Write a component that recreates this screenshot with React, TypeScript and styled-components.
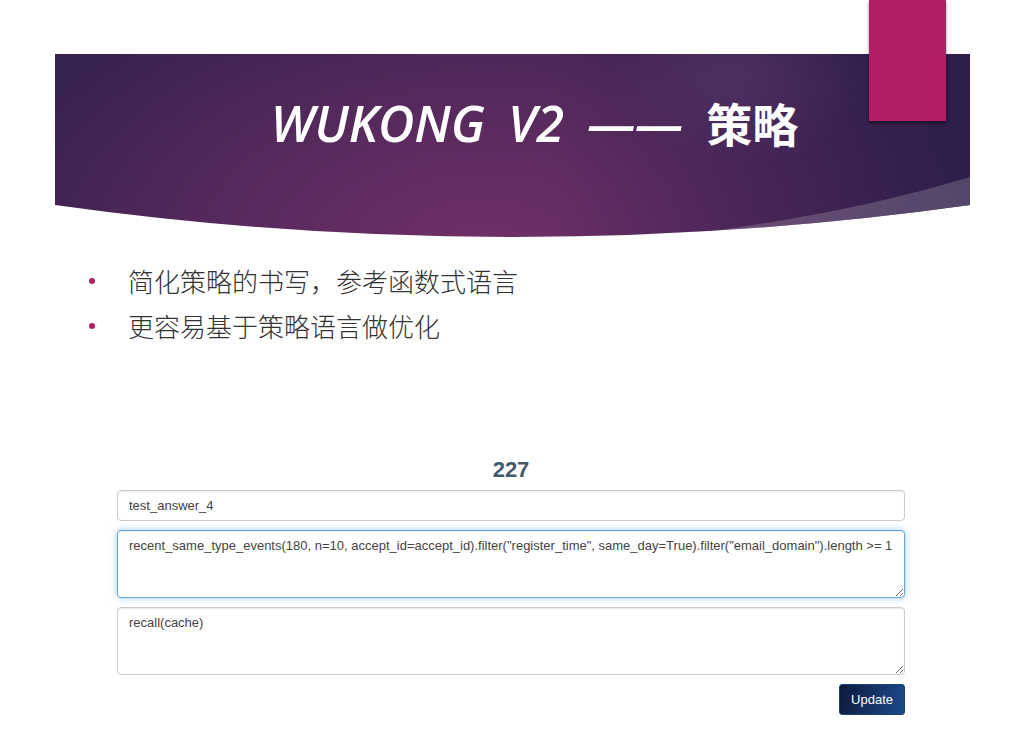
import React from "react";
import styled, { createGlobalStyle, css } from "styled-components";

const GlobalStyle = createGlobalStyle`
  *, *::before, *::after { box-sizing: border-box; }
  body {
    margin: 0;
    background: #fff;
    font-family: "Liberation Sans", "Noto Sans CJK SC", sans-serif;
  }
`;

const Slide = styled.main`
  position: relative;
  padding: 54px 53px 32px 55px;
`;

const Ribbon = styled.div`
  position: absolute;
  top: 0;
  right: 77px;
  width: 77px;
  height: 121px;
  background: #b01e63;
  box-shadow: 0 2px 3px rgba(0, 0, 0, 0.45);
`;

const Banner = styled.header`
  position: relative;
  height: 184px;
  padding: 40px 0 0 44px;
  text-align: center;
`;

const BannerShape = styled.svg`
  position: absolute;
  inset: 0;
  width: 100%;
  height: 100%;
`;

const Title = styled.h1`
  position: relative;
  margin: 0;
  color: #fff;
  font-family: "Open Sans", "Noto Sans CJK SC", sans-serif;
  font-size: 50px;
  font-style: italic;
  font-weight: 600;
  line-height: 56px;
  white-space: nowrap;
`;

const TitleWord = styled.span`
  margin-right: 10px;
`;

const TitleHan = styled.span`
  font-family: "Noto Sans CJK SC", sans-serif;
  font-size: 46px;
  font-style: normal;
  font-weight: 700;
`;

const Points = styled.ul`
  margin: 20px 0 0;
  padding: 0 0 0 34px;
  list-style: none;
`;

const Point = styled.li`
  display: flex;
  align-items: center;
  gap: 33px;
  color: #333;
  font-family: "Noto Sans CJK SC", sans-serif;
  font-size: 26px;
  font-weight: 300;
  line-height: 45px;

  &::before {
    content: "";
    width: 6px;
    height: 6px;
    border-radius: 50%;
    background: #b01e63;
  }
`;

const RuleForm = styled.form`
  display: flex;
  flex-direction: column;
  gap: 9px;
  margin: 102px 65px 0 62px;
`;

const RuleId = styled.h2`
  margin: 0 0 -9px;
  color: #435a6d;
  font-size: 22px;
  font-weight: 700;
  line-height: 40px;
  text-align: center;
`;

const fieldStyle = css<{ $active?: boolean }>`
  display: block;
  width: 100%;
  margin: 0;
  padding: 6px 11px;
  border: 1px solid ${(p) => (p.$active ? "#66a3d8" : "#ccc")};
  border-radius: 4px;
  outline: none;
  background: #fff;
  box-shadow: ${(p) =>
    p.$active
      ? "inset 0 1px 1px rgba(0,0,0,.08), 0 0 7px rgba(102,175,233,.6)"
      : "inset 0 1px 1px rgba(0,0,0,.08)"};
  color: #444;
  font-family: "Liberation Sans", sans-serif;
  font-size: 13px;
  line-height: 18px;
`;

const TextField = styled.input`
  ${fieldStyle}
  height: 31px;
`;

const CodeField = styled.textarea<{ $active?: boolean }>`
  ${fieldStyle}
  height: 68px;
  resize: vertical;
`;

const UpdateButton = styled.button`
  align-self: flex-end;
  height: 31px;
  padding: 0 11px;
  border: 1px solid #1c4175;
  border-radius: 3px;
  background: linear-gradient(100deg, #0e1a3c, #1c4a8c);
  color: #fff;
  font-family: "Liberation Sans", sans-serif;
  font-size: 13px;
  line-height: 18px;
`;

export default function App() {
  return (
    <>
      <GlobalStyle />
      <Slide>
        <Banner>
          <BannerShape viewBox="0 0 915 184" preserveAspectRatio="none" aria-hidden="true">
            <defs>
              <radialGradient id="glow" gradientUnits="userSpaceOnUse" cx="0" cy="0" r="1" gradientTransform="translate(430 195) scale(510 290)">
                <stop offset="0" stopColor="#6f3067" />
                <stop offset="0.35" stopColor="#5f2b61" />
                <stop offset="0.7" stopColor="#4b2758" />
                <stop offset="1" stopColor="#38224f" />
              </radialGradient>
              <radialGradient id="haze" gradientUnits="userSpaceOnUse" cx="0" cy="0" r="1" gradientTransform="translate(680 22) scale(130 90)">
                <stop offset="0" stopColor="#54366a" stopOpacity="0.6" />
                <stop offset="1" stopColor="#54366a" stopOpacity="0" />
              </radialGradient>
              <linearGradient id="shade" x1="0" x2="1" y1="0" y2="0">
                <stop offset="0.55" stopColor="#2b1c48" stopOpacity="0" />
                <stop offset="0.85" stopColor="#2b1c48" stopOpacity="0.4" />
                <stop offset="1" stopColor="#2b1c48" stopOpacity="0.75" />
              </linearGradient>
              <clipPath id="banner-edge">
                <path d="M0 0H915V151Q457 215 0 151Z" />
              </clipPath>
            </defs>
            <g clipPath="url(#banner-edge)">
              <rect width="915" height="184" fill="url(#glow)" />
              <rect width="915" height="184" fill="url(#shade)" />
              <rect width="915" height="184" fill="url(#haze)" />
              <path d="M650 178Q800 158 915 123V184H650Z" fill="#fff" fillOpacity="0.18" />
            </g>
          </BannerShape>
          <Title>
            <TitleWord>WUKONG</TitleWord> <TitleWord>V2</TitleWord> <TitleWord>——</TitleWord>{" "}
            <TitleHan lang="zh-CN">策略</TitleHan>
          </Title>
        </Banner>
        <Ribbon />
        <Points lang="zh-CN">
          <Point>简化策略的书写，参考函数式语言</Point>
          <Point>更容易基于策略语言做优化</Point>
        </Points>
        <RuleForm onSubmit={(e) => e.preventDefault()}>
          <RuleId>227</RuleId>
          <TextField type="text" aria-label="Name" defaultValue="test_answer_4" />
          <CodeField
            $active
            aria-label="Condition"
            spellCheck={false}
            defaultValue={
              'recent_same_type_events(180, n=10, accept_id=accept_id).filter("register_time", same_day=True).filter("email_domain").length >= 1'
            }
          />
          <CodeField aria-label="Action" spellCheck={false} defaultValue="recall(cache)" />
          <UpdateButton type="submit">Update</UpdateButton>
        </RuleForm>
      </Slide>
    </>
  );
}
